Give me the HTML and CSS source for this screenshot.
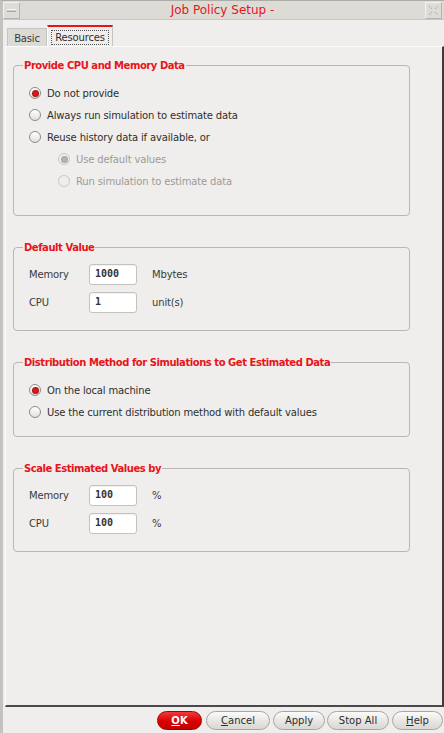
FILE: index.html
```html
<!DOCTYPE html>
<html>
<head>
<meta charset="utf-8">
<link rel="stylesheet" href="styles.css">
</head>
<body>
<div class="window">
  <div class="titlebar">
    <div class="tb-btn"><span class="min-line"></span></div>
    <div class="title">Job Policy Setup -</div>
    <div class="tb-btn">
      <svg width="11" height="11" viewBox="0 0 11 11"><path d="M1 1 L4 4 M7 7 L10 10 M10 1 L7 4 M4 7 L1 10" stroke="#b9b7b3" stroke-width="1.4" stroke-dasharray="1.5 1"/></svg>
    </div>
  </div>
  <div class="tabs">
    <div class="tab">Basic</div>
    <div class="tab active"><span class="focus">Resources</span></div>
  </div>
  <div class="panel">
    <fieldset class="group g1">
      <legend>Provide CPU and Memory Data</legend>
      <div class="radio-row"><span class="radio on"></span>Do not provide</div>
      <div class="radio-row"><span class="radio"></span>Always run simulation to estimate data</div>
      <div class="radio-row"><span class="radio"></span>Reuse history data if available, or</div>
      <div class="radio-row sub disabled"><span class="radio on"></span>Use default values</div>
      <div class="radio-row sub disabled"><span class="radio"></span>Run simulation to estimate data</div>
    </fieldset>
    <fieldset class="group g2">
      <legend>Default Value</legend>
      <div class="field-row"><span class="label">Memory</span><span class="input">1000</span><span class="unit">Mbytes</span></div>
      <div class="field-row"><span class="label">CPU</span><span class="input">1</span><span class="unit">unit(s)</span></div>
    </fieldset>
    <fieldset class="group g3">
      <legend>Distribution Method for Simulations to Get Estimated Data</legend>
      <div class="radio-row"><span class="radio on"></span>On the local machine</div>
      <div class="radio-row"><span class="radio"></span>Use the current distribution method with default values</div>
    </fieldset>
    <fieldset class="group g4">
      <legend>Scale Estimated Values by</legend>
      <div class="field-row"><span class="label">Memory</span><span class="input">100</span><span class="unit">%</span></div>
      <div class="field-row"><span class="label">CPU</span><span class="input">100</span><span class="unit">%</span></div>
    </fieldset>
  </div>
  <div class="buttons">
    <button class="btn ok"><u>O</u>K</button>
    <button class="btn cancel"><u>C</u>ancel</button>
    <button class="btn apply">Apply</button>
    <button class="btn stop">Stop All</button>
    <button class="btn help"><u>H</u>elp</button>
  </div>
</div>
</body>
</html>
```
FILE: styles.css
```css
* { box-sizing: border-box; }
html, body { margin: 0; padding: 0; }
body {
  width: 444px;
  height: 733px;
  background: #efeeec;
  font-family: "DejaVu Sans", sans-serif;
  font-size: 10px;
  letter-spacing: -0.15px;
  color: #2e2e2e;
  overflow: hidden;
}
.window {
  width: 444px;
  height: 733px;
  display: flex;
  flex-direction: column;
  border-left: 3px solid #c4c2be;
  border-top: 1px solid #aeaca8;
}
.titlebar {
  height: 19px;
  display: flex;
  align-items: center;
  background: #dddbd6;
  border-bottom: 1px solid #c9c7c3;
  padding: 0 2px 0 0;
}
.tb-btn {
  width: 17px;
  height: 17px;
  display: flex;
  align-items: center;
  justify-content: center;
  border-left: 1px solid #f4f3f1;
  border-top: 1px solid #f4f3f1;
  border-right: 1px solid #b5b3af;
  border-bottom: 1px solid #b5b3af;
  background: #dedcd7;
}
.min-line {
  width: 9px;
  height: 3px;
  border-top: 1px solid #f6f6f6;
  border-bottom: 1px solid #a9a7a3;
  background: #cfcdc8;
}
.title {
  flex: 1;
  text-align: center;
  color: #e8141a;
  font-size: 12px;
  letter-spacing: 0;
  padding-left: 0;
}
.tabs {
  height: 26px;
  display: flex;
  align-items: flex-end;
  padding-left: 4px;
}
.tab {
  height: 18px;
  width: 40px;
  background: #dcdad5;
  border: 1px solid #c6c4c0;
  border-bottom: none;
  display: flex;
  align-items: center;
  justify-content: center;
  color: #3a3a3a;
  padding-top: 1px;
}
.tab.active {
  height: 21px;
  width: 66px;
  background: #efeeec;
  border-top: 2px solid #e8141a;
  border-left: 1px solid #fbfbfb;
  border-right: 1px solid #c6c4c0;
}
.focus {
  border: 1px dotted #555;
  padding: 1px 3px;
  color: #2e2e2e;
}
.panel {
  flex: 1;
  margin-left: 2px;
  border-top: 1px solid #fbfbfb;
  border-left: 1px solid #fbfbfb;
  border-right: 2px solid #3c3c3c;
  border-bottom: 2px solid #4a4a4a;
  padding: 12px 0 0 7px;
}
.group {
  width: 397px;
  margin: 0 0 25px 0;
  border: 1px solid #b9b7b3;
  border-radius: 4px;
  padding: 0 0 0 15px;
  min-width: 0;
}
.group legend {
  color: #e8141a;
  font-weight: bold;
  letter-spacing: -0.45px;
  padding: 0 1px;
  margin-left: -6px;
  line-height: 13px;
}
.g1 { padding-top: 10px; padding-bottom: 23px; }
.g2 { padding-top: 6px; padding-bottom: 14px; }
.g3 { padding-top: 10px; padding-bottom: 13px; }
.g4 { padding-top: 6px; padding-bottom: 14px; }
.radio-row {
  height: 22px;
  display: flex;
  align-items: center;
}
.radio-row.sub { padding-left: 29px; }
.radio {
  width: 12px;
  height: 12px;
  border-radius: 50%;
  border: 1px solid #8d8b87;
  background: linear-gradient(#ffffff, #e2e0dc);
  margin-right: 6px;
  display: flex;
  align-items: center;
  justify-content: center;
  flex: none;
}
.radio.on::after {
  content: "";
  width: 5px;
  height: 5px;
  border-radius: 50%;
  background: #e4121a;
  box-shadow: 0 0 0 1px #9e1a1a;
}
.disabled { color: #9d9b97; }
.disabled .radio { border-color: #c9c7c3; background: #efeeec; }
.disabled .radio.on::after { background: #b4b2ae; box-shadow: 0 0 0 1px #a8a6a2; }
.field-row {
  height: 28px;
  display: flex;
  align-items: center;
}
.label { width: 60px; color: #3a3a3a; }
.input {
  width: 48px;
  height: 21px;
  background: #fff;
  border: 1px solid #c4c2be;
  border-radius: 3px;
  box-shadow: inset 0 1px 1px rgba(0,0,0,0.06);
  font-family: "DejaVu Sans Mono", monospace;
  font-weight: bold;
  font-size: 10px;
  letter-spacing: 0;
  color: #333;
  padding: 3px 0 0 5px;
  margin-right: 15px;
}
.unit { color: #3a3a3a; }
.buttons {
  height: 26px;
  display: flex;
  align-items: center;
  justify-content: flex-end;
  padding-right: 1px;
  gap: 3px;
}
.btn {
  height: 19px;
  border-radius: 10px;
  border: 1px solid #a8a6a2;
  background: linear-gradient(#fbfbfa, #e6e4e0 60%, #d9d7d2);
  font-family: "DejaVu Sans", sans-serif;
  font-size: 10px;
  color: #2e2e2e;
  padding: 0;
  margin: 0;
}
.btn.ok {
  width: 45px;
  background: linear-gradient(#f03a3a, #d90000 55%, #c10000);
  border-color: #a30000;
  color: #fff;
  font-weight: bold;
  margin-right: 1px;
}
.btn.cancel { width: 64px; }
.btn.apply { width: 52px; }
.btn.stop { width: 62px; margin-left: -1px; }
.btn.help { width: 51px; }
```
